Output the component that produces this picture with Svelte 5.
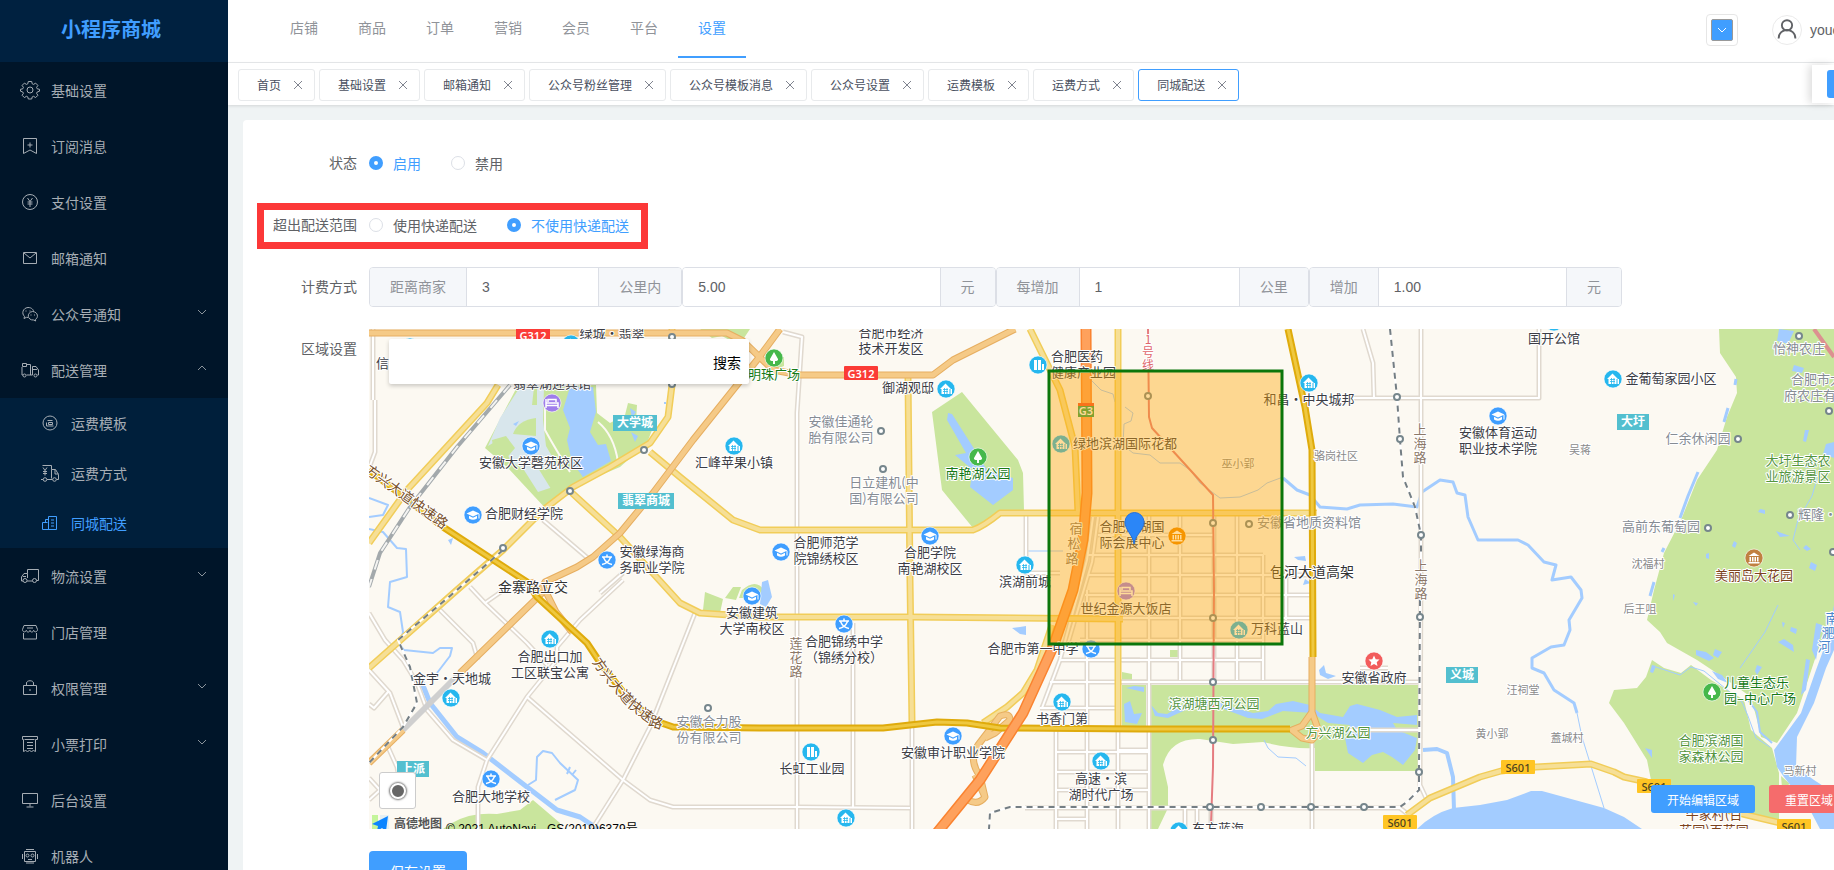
<script lang="ts">
    interface Label {
        x: number;
        y: number;
        lines: string[];
        tone?: string;
        anchor?: string;
    }

    interface Poi {
        x: number;
        y: number;
        kind: string;
    }

    interface MenuItem {
        name: string;
        icon: string;
        children?: MenuItem[];
        arrow?: boolean;
    }

    const topNav = ['店铺', '商品', '订单', '营销', '会员', '平台', '设置'];
    let activeNav = $state('设置');

    let tabs = $state(['首页', '基础设置', '邮箱通知', '公众号粉丝管理', '公众号模板消息', '公众号设置', '运费模板', '运费方式', '同城配送']);
    let activeTab = $state('同城配送');

    const menu: MenuItem[] = [
        { name: '基础设置', icon: 'gear' },
        { name: '订阅消息', icon: 'bookmark' },
        { name: '支付设置', icon: 'yen' },
        { name: '邮箱通知', icon: 'mail' },
        { name: '公众号通知', icon: 'wechat', arrow: true },
        {
            name: '配送管理',
            icon: 'delivery',
            arrow: true,
            children: [
                { name: '运费模板', icon: 'template' },
                { name: '运费方式', icon: 'freight' },
                { name: '同城配送', icon: 'city' }
            ]
        },
        { name: '物流设置', icon: 'truck', arrow: true },
        { name: '门店管理', icon: 'shop' },
        { name: '权限管理', icon: 'lock', arrow: true },
        { name: '小票打印', icon: 'receipt', arrow: true },
        { name: '后台设置', icon: 'monitor' },
        { name: '机器人', icon: 'robot' }
    ];

    let status = $state('on');
    let outside = $state('no');
    let keyword = $state('');

    let fees = $state([
        { id: 'distance', before: '距离商家', value: '3', after: '公里内' },
        { id: 'base', before: '', value: '5.00', after: '元' },
        { id: 'step', before: '每增加', value: '1', after: '公里' },
        { id: 'extra', before: '增加', value: '1.00', after: '元' }
    ]);

    function closeTab(name: string): void {
        tabs = tabs.filter((t) => t !== name);
    }

    // Map shapes
    const greens: string[] = [
        'M517 387L485 448L507 467L547 510L573 487L620 467L647 443L652 430L636 421L637 405L628 403L625 415L610 423L597 413L596 385Z',
        'M700 329H750L744 338L737 344L722 336L712 338Z',
        'M962 392L932 412L942 490L973 528L1003 510H1024L1023 473L1018 460Z',
        'M705 592L723 599L720 613L703 610Z M733 587L741 587L736 600L725 598Z M742 590Q756 578 764 590L762 594Q754 586 746 598L739 598Z',
        'M774 358L784 357V366L774 370Z',
        'M443 829L452 823Q470 812 497 814L520 810L533 800L560 823V829Z',
        'M1150 685H1418V771H1315V748Q1290 749 1263 742L1233 744L1200 739Q1170 738 1163 765L1168 787V808L1158 829H1151Z',
        'M1122 685H1146V727H1122Z M1170 650H1178V657H1170Z M1122 672L1132 674V680H1122Z',
        'M1719 329L1720 353L1736 377L1737 393L1727 417L1717 450L1697 480L1681 520L1664 553L1654 590L1647 620L1660 632L1667 643L1697 660L1727 680L1751 697L1757 720L1761 737L1777 743L1797 713L1817 653L1834 613V329Z',
        'M1652 660L1664 668L1681 673L1691 665L1711 680L1744 700L1751 730L1772 748L1779 773L1779 820L1747 813L1711 807L1652 803V785L1647 760L1624 723L1609 703L1614 690L1637 688L1646 677Z',
        'M1781 776L1790 784L1782 788Z M1828 818L1834 814V826Z'
    ];

    const campus = 'M520 387L500 418L488 446L498 440L512 462L524 470L538 492L556 486L560 470L546 446L543 420L544 387Z';

    const campusGreens: string[] = [
        'M513 434Q518 420 536 418L536 436Z',
        'M534 387H537V405H532Z',
        'M492 440L506 436L515 448L505 460L494 452Z',
        'M546 410L560 412L565 428L548 430Z',
        'M538 468L560 470L570 488L556 497Z'
    ];

    const waters: string[] = [
        'M570 387H593L596 412L590 432L598 445L606 444L611 461L583 477L572 462L567 440L570 428L563 410Z',
        'M630 408L636 412L632 418Z M631 432L638 436L635 442Z M513 424L519 421L516 426Z M664 402H666V404H664Z M448 540L453 538L451 545Z',
        'M948 413L952 414L973 447L987 470L1013 478V490L993 505L970 487L973 470L955 455L966 453L947 420Z',
        'M1012 628L1020 627L1026 626V635L1020 634Z',
        'M762 582L768 580L772 597L766 607L760 604Z',
        'M1151 705L1158 713L1167 714L1184 704L1213 699L1228 706L1253 713L1268 711L1276 704L1293 701L1310 705L1320 713L1343 717L1350 706L1357 704L1380 710L1397 717L1417 715V725L1393 723L1397 730L1417 738L1415 750L1403 765L1392 757L1383 752L1372 755L1363 763L1348 753L1345 738L1350 725L1328 723L1312 713L1283 711L1262 719L1248 718L1213 705L1190 708L1168 718L1155 716Z',
        'M1124 704L1130 701L1134 714L1142 713L1137 724L1125 722Z M1126 688L1134 686L1144 687V692Z',
        'M1319 670L1324 665L1326 673L1336 676L1328 679L1320 675Z',
        'M1294 557L1305 556L1306 561L1298 560Z M1305 579L1311 583L1303 585Z',
        'M1417 829Q1432 814 1453 808L1480 805L1507 800L1531 791H1542L1604 808L1624 817L1642 829Z',
        'M1834 605L1827 640L1816 670L1801 713L1774 750L1777 767L1784 777L1810 810L1820 829H1834V793L1814 780L1796 767L1797 737L1814 703L1826 668L1834 650Z',
        'M1779 329L1794 331L1788 344L1777 341Z M1794 365L1804 368L1802 373L1792 371Z M1805 430L1809 430L1806 442L1803 441Z M1826 444L1834 442V458L1823 454Z M1805 460L1815 458L1816 467L1805 468Z',
        'M1760 509L1765 510V514L1758 512Z M1734 541L1737 543L1735 548L1732 546Z M1776 531L1790 536L1780 537Z M1806 545L1811 549L1807 551L1803 548Z M1811 562L1817 565L1815 571L1809 568Z M1706 554L1709 553V559L1706 558Z',
        'M1696 650L1706 652L1714 658L1709 661L1696 655Z M1715 649L1722 652L1718 658L1713 655Z M1757 665L1762 667L1757 675L1755 671Z M1712 671L1722 675L1728 683L1718 679Z M1791 627L1797 629L1796 634L1790 631Z M1782 622L1785 623L1783 628Z M1778 642L1784 639L1793 645L1794 652Z',
        'M1806 659L1810 660L1806 690L1801 695Z M1816 623L1822 625L1816 660L1812 650Z M1652 665L1656 666L1653 673L1650 672Z M1645 748L1652 750V758Z M1673 594L1675 595L1673 601Z M1693 602L1698 603L1696 606Z'
    ];

    const streams = [
        { d: 'M1283 478L1297 490L1310 495L1320 507L1347 509L1360 505L1393 504L1417 507L1422 492L1440 480L1453 482L1457 493L1465 495L1468 517L1478 540H1518L1528 545L1544 562L1556 565L1552 580L1571 577L1581 590L1582 598L1569 620L1570 630L1564 645L1551 647L1532 658V668L1544 673L1554 690L1574 703L1577 713', w: 3 },
        { d: 'M1577 713L1582 737L1604 808', w: 1 },
        { d: 'M1423 750L1437 749L1447 753L1453 777L1454 810', w: 4 },
        { d: 'M1125 407L1133 413L1131 421L1124 424L1123 445L1133 453L1150 455L1160 463L1180 463L1190 470L1200 483L1220 498L1240 497L1258 490L1267 483L1283 477', w: 1 },
        { d: 'M1091 380L1101 390L1113 394L1115 402', w: 1 },
        { d: 'M369 498L388 505L383 515L369 517M369 529L383 532L397 548L406 549L407 577L390 582L388 607L400 612L403 632L400 645L404 650L433 653L440 648L452 648L450 656L437 673', w: 2 },
        { d: 'M422 683L430 703L457 737L483 753L527 787L557 810L580 817L598 829', w: 5 },
        { d: 'M528 785L536 780L537 757L543 751L552 753L560 763L578 780L575 790L555 800M567 774L570 767M572 775L576 770', w: 2 },
        { d: 'M1264 740L1268 748L1278 757L1296 758L1306 766', w: 1 },
        { d: 'M1028 551H1063', w: 1 },
        { d: 'M1698 472L1688 496L1680 518M1728 408L1724 422M1736 379L1735 385M1664 548L1662 552M1654 582L1650 596', w: 3 },
        { d: 'M1656 667L1680 675L1691 667L1704 671L1742 702L1748 716L1756 738L1770 747', w: 1 },
        { d: 'M1746 697L1757 712L1760 732L1772 743', w: 2 },
        { d: 'M1822 462L1812 496L1798 520L1793 540L1800 550M1778 605L1765 632L1740 668', w: 1 }
    ];

    const minorRoads: string[] = [
        'M373 329V400M375 400V452L369 468',
        'M369 613L385 640L403 660L417 683L427 710L453 740L487 760',
        'M369 670L390 693L403 727M369 704L374 708L388 692M388 747L397 767L401 790M369 778L380 790L369 800',
        'M470 587L485 603L508 587M485 603L527 643L547 665',
        'M440 610L473 643L478 660',
        'M623 580L580 620L557 647L557 660L527 697L487 760L478 787V829',
        'M527 697L623 780L650 800L673 807H797L910 808',
        'M695 613L650 727L623 780L592 829',
        'M543 520L590 560M623 573L600 593',
        'M783 332L802 337L797 413V829',
        'M853 623V808M912 727V829M1026 513V573H1060',
        'M1056 727V829M1087 590V829M1118 727V829',
        'M1060 660H1140M1050 682H1148M1040 708H1115M1056 752H1148M1056 772H1148M1056 790H1148M1056 819H1088M1118 750H1148',
        'M1093 517L1087 560L1060 660L1042 708M1098 517L1092 562L1066 650',
        'M1149 515V829M1180 515V680M1214 515V680M1237 515V680M1263 555V680M1286 570V620',
        'M1098 535H1213M1088 555H1263M1088 575H1310M1085 595H1310M1080 618H1310M1080 640H1263M1122 660H1263M1122 682H1420',
        'M1363 329L1373 363L1374 398M1350 398H1539V329',
        'M1421 329V560L1420 785L1427 800M1400 808L1410 816',
        'M1312 740V829M1025 808H1400M1185 808V829M1197 808V829M1211 808V829',
        'M1350 730H1420M1360 668H1388'
    ];

    const yellowRoads: string[] = [
        'M498 385L487 403L407 490L369 543',
        'M672 329V385L668 417L650 443L610 467L573 487L543 510L503 550L457 590L369 668',
        'M650 452L680 477L733 520L760 530H973Q984 526 1000 513H1317',
        'M572 493L620 537L680 603L700 613L760 617H910L1123 619',
        'M908 377L910 580L912 723',
        'M1030 329L1060 390L1075 447L1078 513',
        'M1118 329V727',
        'M1052 625L1037 670L1023 693L1007 707L983 723',
        'M1407 815L1430 798L1480 777L1501 771L1536 767L1591 764L1614 772L1624 777L1647 782',
        'M1711 806L1747 815L1797 827'
    ];

    const orangeRoads: string[] = [
        'M369 333H727L743 341L773 370L800 375H933L953 360L1015 329',
        'M780 329L757 360L737 385L693 440L653 493L620 533L593 557L577 567L545 582L537 598L460 673',
        'M403 730L369 763',
        'M537 598L545 590L556 612L572 632M530 580L537 598',
        'M980 776Q968 760 978 745L988 732L1000 716Q1010 712 1010 720L995 733L985 738M980 776L985 797Q978 806 968 800M985 797L975 775',
        'M1312 657V712L1302 726L1292 730L1302 738L1312 740L1319 732L1312 712'
    ];

    const mainRoads: string[] = [
        'M369 470L443 527L527 582L537 597L587 643L603 667L627 697L653 720L673 727L760 728H883L937 722L967 723L1000 728L1140 729H1290',
        'M1288 329L1305 407L1312 450L1313 657'
    ];

    const highway = 'M1086 329L1087 493L1083 540L1073 590L1053 647L1023 713L980 780L936 834';
    const metro = 'M1148 329L1149 417L1152 428L1213 495L1214 590L1213 767L1211 823';
    const grayRail = 'M510 385L457 447L410 507L380 553L369 587';
    const dashedRails: string[] = [
        'M1390 329L1397 397L1400 440L1403 477L1415 507L1421 535V553M1420 600L1419 772V790L1407 802L1400 807H1010L990 813L989 829',
        'M503 550L457 590L398 640L410 667L417 703L403 727L369 763'
    ];

    const stops = [
        [672, 337], [672, 384], [644, 450], [570, 491], [503, 548], [708, 708], [881, 431], [883, 469],
        [1148, 396], [1213, 523], [1213, 618], [1213, 682], [1213, 740], [1210, 807], [1261, 807], [1311, 807],
        [1364, 807], [1419, 772], [1420, 617], [1421, 535], [1400, 439], [1397, 397], [1249, 524], [1738, 439],
        [1708, 528], [1799, 336], [1829, 411], [1790, 515], [1833, 552]
    ];

    const poiColors: Record<string, string> = {
        house: '#26b7ee',
        tower: '#26b7ee',
        cap: '#3f9eff',
        wen: '#3f9eff',
        hotel: '#9f7eea',
        tree: '#46b84b',
        hall: '#f08a00',
        villa: '#c08040',
        star: '#f25c5c'
    };

    const pois: Poi[] = [
        { x: 410, y: 347, kind: 'house' }, { x: 571, y: 344, kind: 'house' }, { x: 734, y: 446, kind: 'house' },
        { x: 550, y: 639, kind: 'house' }, { x: 451, y: 698, kind: 'house' }, { x: 946, y: 389, kind: 'house' },
        { x: 1025, y: 565, kind: 'house' }, { x: 1061, y: 444, kind: 'house' }, { x: 1062, y: 702, kind: 'house' },
        { x: 846, y: 818, kind: 'house' }, { x: 1101, y: 761, kind: 'house' }, { x: 1309, y: 383, kind: 'house' },
        { x: 1239, y: 630, kind: 'house' }, { x: 1179, y: 831, kind: 'house' }, { x: 1613, y: 379, kind: 'house' },
        { x: 1554, y: 322, kind: 'house' }, { x: 1038, y: 365, kind: 'tower' }, { x: 811, y: 752, kind: 'tower' },
        { x: 531, y: 446, kind: 'cap' }, { x: 473, y: 515, kind: 'cap' }, { x: 752, y: 596, kind: 'cap' },
        { x: 781, y: 552, kind: 'cap' }, { x: 930, y: 536, kind: 'cap' }, { x: 953, y: 736, kind: 'cap' },
        { x: 1498, y: 416, kind: 'cap' }, { x: 607, y: 560, kind: 'wen' }, { x: 491, y: 779, kind: 'wen' },
        { x: 844, y: 624, kind: 'wen' }, { x: 1091, y: 649, kind: 'wen' }, { x: 552, y: 403, kind: 'hotel' },
        { x: 1126, y: 591, kind: 'hotel' }, { x: 774, y: 358, kind: 'tree' }, { x: 978, y: 457, kind: 'tree' },
        { x: 1712, y: 692, kind: 'tree' }, { x: 1177, y: 536, kind: 'hall' }, { x: 1754, y: 558, kind: 'villa' },
        { x: 1374, y: 661, kind: 'star' }
    ];

    const labels: Label[] = [
        { x: 612, y: 334, lines: ['绿城·翡翠'] },
        { x: 389, y: 364, lines: ['信达'] },
        { x: 552, y: 384, lines: ['翡翠湖迎宾馆'] },
        { x: 531, y: 463, lines: ['安徽大学磬苑校区'] },
        { x: 734, y: 463, lines: ['汇峰苹果小镇'] },
        { x: 524, y: 514, lines: ['合肥财经学院'] },
        { x: 652, y: 552, lines: ['安徽绿海商', '务职业学院'] },
        { x: 533, y: 588, lines: ['金寨路立交'], tone: 'road' },
        { x: 550, y: 657, lines: ['合肥出口加', '工区联宝公寓'] },
        { x: 452, y: 679, lines: ['金宇·天地城'] },
        { x: 491, y: 797, lines: ['合肥大地学校'] },
        { x: 709, y: 722, lines: ['安徽合力股', '份有限公司'], tone: 'gray' },
        { x: 752, y: 613, lines: ['安徽建筑', '大学南校区'] },
        { x: 774, y: 375, lines: ['明珠广场'], tone: 'green' },
        { x: 891, y: 333, lines: ['合肥市经济', '技术开发区'] },
        { x: 908, y: 388, lines: ['御湖观邸'] },
        { x: 841, y: 422, lines: ['安徽佳通轮', '胎有限公司'], tone: 'gray' },
        { x: 884, y: 483, lines: ['日立建机(中', '国)有限公司'], tone: 'gray' },
        { x: 978, y: 474, lines: ['南艳湖公园'], tone: 'green' },
        { x: 826, y: 543, lines: ['合肥师范学', '院锦绣校区'] },
        { x: 930, y: 553, lines: ['合肥学院', '南艳湖校区'] },
        { x: 1025, y: 582, lines: ['滨湖前城'] },
        { x: 1051, y: 357, lines: ['合肥医药', '健康产业园'], anchor: 'start' },
        { x: 1125, y: 444, lines: ['绿地滨湖国际花都'] },
        { x: 1132, y: 527, lines: ['合肥滨湖国', '际会展中心'] },
        { x: 844, y: 642, lines: ['合肥锦绣中学', '（锦绣分校）'] },
        { x: 1033, y: 649, lines: ['合肥市第一中学'] },
        { x: 1062, y: 719, lines: ['书香门第'] },
        { x: 953, y: 753, lines: ['安徽审计职业学院'] },
        { x: 812, y: 769, lines: ['长虹工业园'] },
        { x: 1101, y: 779, lines: ['高速·滨', '湖时代广场'] },
        { x: 1126, y: 609, lines: ['世纪金源大饭店'] },
        { x: 1309, y: 400, lines: ['和昌·中央城邦'] },
        { x: 1336, y: 456, lines: ['骆岗社区'], tone: 'village' },
        { x: 1238, y: 464, lines: ['巫小郢'], tone: 'village' },
        { x: 1309, y: 523, lines: ['安徽省地质资料馆'], tone: 'gray' },
        { x: 1312, y: 573, lines: ['包河大道高架'], tone: 'road' },
        { x: 1277, y: 629, lines: ['万科蓝山'] },
        { x: 1374, y: 678, lines: ['安徽省政府'] },
        { x: 1214, y: 704, lines: ['滨湖塘西河公园'], tone: 'park' },
        { x: 1338, y: 733, lines: ['方兴湖公园'], tone: 'park' },
        { x: 1218, y: 829, lines: ['东方蓝海'] },
        { x: 1671, y: 379, lines: ['金葡萄家园小区'] },
        { x: 1554, y: 339, lines: ['国开公馆'] },
        { x: 1498, y: 433, lines: ['安徽体育运动', '职业技术学院'] },
        { x: 1580, y: 450, lines: ['吴蒋'], tone: 'village' },
        { x: 1698, y: 439, lines: ['仁余休闲园'], tone: 'gray' },
        { x: 1661, y: 527, lines: ['高前东葡萄园'], tone: 'gray' },
        { x: 1799, y: 349, lines: ['怡神农庄'], tone: 'gray' },
        { x: 1791, y: 380, lines: ['合肥市大'], tone: 'gray', anchor: 'start' },
        { x: 1784, y: 396, lines: ['府农庄有'], tone: 'gray', anchor: 'start' },
        { x: 1798, y: 461, lines: ['大圩生态农', '业旅游景区'], tone: 'park' },
        { x: 1798, y: 515, lines: ['辉隆·大'], tone: 'gray', anchor: 'start' },
        { x: 1754, y: 576, lines: ['美丽岛大花园'], tone: 'brown' },
        { x: 1648, y: 564, lines: ['沈福村'], tone: 'village' },
        { x: 1640, y: 609, lines: ['后王咀'], tone: 'village' },
        { x: 1523, y: 690, lines: ['汪祠堂'], tone: 'village' },
        { x: 1492, y: 734, lines: ['黄小郢'], tone: 'village' },
        { x: 1567, y: 738, lines: ['蓋城村'], tone: 'village' },
        { x: 1724, y: 683, lines: ['儿童生态乐', '园–中心广场'], tone: 'green', anchor: 'start' },
        { x: 1711, y: 741, lines: ['合肥滨湖国', '家森林公园'], tone: 'park' },
        { x: 1800, y: 771, lines: ['马新村'], tone: 'village' },
        { x: 1714, y: 815, lines: ['牛家村(百', '花园)百花园'], tone: 'brown' }
    ];

    // Street names written top to bottom, one character per row
    const columns = [
        { x: 1076, y: 529, step: 15, lean: -2, text: '宿松路', tone: 'street' },
        { x: 796, y: 644, step: 14, lean: 0, text: '莲花路', tone: 'street' },
        { x: 1420, y: 430, step: 14, lean: 0, text: '上海路', tone: 'street' },
        { x: 1421, y: 566, step: 14, lean: 0, text: '上海路', tone: 'street' },
        { x: 1148, y: 340, step: 13, lean: 0, text: '1号线', tone: 'line' },
        { x: 1832, y: 619, step: 14, lean: -4, text: '南淝河', tone: 'river' }
    ];

    const districts = [
        { x: 635, y: 423, text: '大学城' },
        { x: 646, y: 501, text: '翡翠商城' },
        { x: 413, y: 769, text: '上派' },
        { x: 1462, y: 675, text: '义城' },
        { x: 1633, y: 422, text: '大圩' }
    ];

    const shields = [
        { x: 533, y: 335, text: 'G312', kind: 'national' },
        { x: 861, y: 373, text: 'G312', kind: 'national' },
        { x: 1400, y: 822, text: 'S601', kind: 'province' },
        { x: 1518, y: 767, text: 'S601', kind: 'province' },
        { x: 1654, y: 786, text: 'S601', kind: 'province' },
        { x: 1794, y: 826, text: 'S601', kind: 'province' }
    ];
</script>

{#snippet menuIcon(name: string)}
    <svg class="icon" viewBox="0 0 20 20" aria-hidden="true">
        {#if name === 'gear'}
            <circle cx="10" cy="10" r="3" />
            <path d="M8.3 1.5h3.4l.5 2.3 1.4.6 2-1.3 2.3 2.3-1.3 2 .6 1.4 2.3.5v1.9l-2.3.8-.6 1.3 1.3 2-2.3 2.3-2-1.3-1.4.6-.5 2.1H8.300l-.5-2.1-1.4-.6-2 1.3-2.3-2.3 1.3-2-.6-1.3-2.3-.8V9.300l2.300-.5.6-1.4-1.300-2 2.300-2.300 2 1.300 1.4-.6z" />
        {:else if name === 'bookmark'}
            <path d="M3.5 2.5h13v15L10 14l-6.5 3.5zM10 6.5v5M7.5 9h5" />
        {:else if name === 'yen'}
            <circle cx="10" cy="10" r="7.5" />
            <path d="M7.5 6l2.5 3.5L12.5 6M10 9.5V15M7.5 10h5M7.5 12h5" />
        {:else if name === 'mail'}
            <path d="M3.5 4.5h13v11h-13zM4 5l6 5 6-5" />
        {:else if name === 'wechat'}
            <path d="M8 13.5l-1.5-.2-2.5 1.2.5-2.2C1.5 10 2.5 4 8 3.5c4 0 5.5 2.5 5.5 4" />
            <path d="M12.5 7.5c6 .5 6 6.500 2.800 8l.4 1.5-2-1c-6.500.5-7.500-7.500-1.200-8.500zM5.5 7h1M9.5 7h1M10.5 11h1M14 11h1" />
        {:else if name === 'delivery'}
            <path d="M2.5 3.5h4v3h-4zM6.5 4.5h4v10.5M2 7v8h1M6.5 15h6M12.5 15V6.5h3.5l2.5 3.5v5h-1M13 9.5h4" />
            <circle cx="4.5" cy="15.5" r="1.5" /><circle cx="15.5" cy="15.5" r="1.5" />
        {:else if name === 'template'}
            <circle cx="10" cy="10" r="7" />
            <path d="M7.5 7.5h5M8.5 9.5h4v2h-4zM6.5 9.5v3.5h7" />
        {:else if name === 'freight'}
            <path d="M1 16.5h2M7 16.5h5.5M16.5 16.5h2v-5l-3-5h-4V2.5h-9M11.5 6.5v9M3 4.5l2 3 2-3M5 7.5v5M3 8.5h4M3 10.5h4M15 7v4h3.5" />
            <circle cx="5" cy="16.5" r="1.8" /><circle cx="14.5" cy="16.5" r="1.8" />
        {:else if name === 'city'}
            <path d="M2.5 9.5h5M2.5 9.5v7h14M8.5 16.5V3.5h8v13M5.5 9V6.5h3M11 7h3M11 10h3M11 13h3" />
        {:else if name === 'truck'}
            <path d="M7.500 3.5h11v11h-2M7.500 3.5v4H4L1.5 11v4H3M7 15h5.500M7.5 7.5V12M3 10.5h3" />
            <circle cx="5" cy="14.5" r="2" /><circle cx="14.5" cy="14.5" r="2" />
        {:else if name === 'shop'}
            <path d="M4 3.5h12l1.5 4c0 3-3.500 3-3.800.8-.5 2.300-3.500 2.300-3.700 0-.3 2.300-3.300 2.300-3.700 0-.5 2.200-3.800 2.200-3.800-.8zM3.5 11v6h13v-6M7 6h6" />
        {:else if name === 'lock'}
            <path d="M3.5 7.5h13v9h-13zM6.5 7.5V5c0-3 7-3 7 0v2.5M10 11v2" />
        {:else if name === 'receipt'}
            <path d="M2.5 2.5h15v3h-2v12l-2-1-2 1-2-1-2 1-2-1-2 1v-12h-1zM4.5 5.5h10M7 8.5h6M7 11.5h6M7 14.5h6" />
        {:else if name === 'monitor'}
            <path d="M2.5 3.5h15v10h-15zM10 13.5v3M6.5 17h7" />
        {:else if name === 'robot'}
            <path d="M4.5 5.5h11v10h-11zM6 3.5h8M2.5 8v5M17.5 8v5M6 17h8M8 13.5h4" />
            <circle cx="7.5" cy="9.5" r="1.5" /><circle cx="12.5" cy="9.5" r="1.5" />
        {/if}
    </svg>
{/snippet}

{#snippet poiGlyph(kind: string)}
    {#if kind === 'house'}
        <path d="M-6 0L-.5-5.5 5 0H3.5V5H-4.5V0zM4.500 0h1.500v5h-1.500z" fill="#fff" />
        <path d="M-3 .5h5M-3 2.5h5M-1.500-1v6M1-1v6" stroke="#26b7ee" stroke-width=".8" fill="none" />
    {:else if kind === 'tower'}
        <path d="M-4-5h3V5h-3zM0-5h3V5H0zM4-1h2v6H4z" fill="#fff" />
    {:else if kind === 'cap'}
        <path d="M-6.5-1.5L0-4.5 6.5-1.5 0 1.5zM-4 .8L0 2.7 4 .8V3.5Q0 6-4 3.5zM5.5-1h1v4.5h-1z" fill="#fff" />
    {:else if kind === 'wen'}
        <path d="M0-5.5v2M-5-3H5M-3.5-2.5Q-1 3.5 5 4.5M3.5-2.5Q1 3.5-5 4.5" stroke="#fff" stroke-width="1.5" fill="none" />
    {:else if kind === 'hotel'}
        <path d="M-6-4V5M-6 2.5H6M6 5V0H-6M-4-1V-3.5H4V-1" stroke="#fff" stroke-width="1.5" fill="none" />
    {:else if kind === 'tree'}
        <path d="M0-6L4 1Q4.5 3 1 3V6H-1V3Q-4.5 3-4 1z" fill="#fff" />
    {:else if kind === 'star'}
        <path d="M0-5.5L1.700-1.800 5.500-1.400 2.700 1.300 3.500 5 0 3.100-3.500 5-2.700 1.300-5.500-1.400-1.700-1.800z" fill="#fff" />
    {:else}
        <path d="M-5.5-2L0-5.5 5.5-2zM-5.5 4h11v1.5h-11zM-4.5-1h1.5v4.5h-1.5zM-2-1h1.5v4.5H-2zM.5-1H2v4.5H.5zM3-1h1.5v4.5H3z" fill="#fff" />
    {/if}
{/snippet}

{#snippet arrow(up: boolean)}
    <svg class="arrow" class:up viewBox="0 0 10 6" aria-hidden="true"><path d="M1 1l4 4 4-4" /></svg>
{/snippet}

<div class="layout">
    <aside class="sidebar">
        <h1 class="brand">小程序商城</h1>
        <nav class="menu">
            {#each menu as item}
                <a class="menu-item" href="#{item.icon}">
                    {@render menuIcon(item.icon)}
                    <span>{item.name}</span>
                    {#if item.arrow}{@render arrow(!!item.children)}{/if}
                </a>
                {#if item.children}
                    <div class="submenu">
                        {#each item.children as child}
                            <a class="menu-item child" class:active={child.name === '同城配送'} href="#{child.icon}">
                                {@render menuIcon(child.icon)}
                                <span>{child.name}</span>
                            </a>
                        {/each}
                    </div>
                {/if}
            {/each}
        </nav>
    </aside>

    <div class="main">
        <header class="topbar">
            <nav class="top-nav">
                {#each topNav as item}
                    <a href="#top" class:active={activeNav === item} onclick={() => (activeNav = item)}>{item}</a>
                {/each}
            </nav>
            <div class="account">
                <button class="picker" aria-label="主题颜色">
                    <span class="swatch"><svg viewBox="0 0 10 6"><path d="M1 1l4 4 4-4" /></svg></span>
                </button>
                <span class="avatar">
                    <svg viewBox="0 0 30 30"><circle cx="15" cy="10" r="5.5" /><path d="M6 24c0-12 18-12 18 0" /></svg>
                </span>
                <span class="user">youc</span>
            </div>
        </header>

        <div class="tabbar">
            <div class="tabs">
                {#each tabs as tab}
                    <div class="tab" class:active={activeTab === tab}>
                        <button class="tab-name" onclick={() => (activeTab = tab)}>{tab}</button>
                        <button class="tab-close" aria-label="关闭" onclick={() => closeTab(tab)}>
                            <svg viewBox="0 0 10 10"><path d="M1 1l8 8M9 1l-8 8" /></svg>
                        </button>
                    </div>
                {/each}
            </div>
            <div class="tab-tools"><button aria-label="标签选项"></button></div>
        </div>

        <main class="page">
            <form class="card" onsubmit={(e) => e.preventDefault()}>
                <div class="row">
                    <span class="label">状态</span>
                    <div class="radios">
                        <label><input type="radio" name="status" value="on" bind:group={status} /><span>启用</span></label>
                        <label><input type="radio" name="status" value="off" bind:group={status} /><span>禁用</span></label>
                    </div>
                </div>

                <div class="row marked">
                    <span class="label">超出配送范围</span>
                    <div class="radios">
                        <label><input type="radio" name="outside" value="yes" bind:group={outside} /><span>使用快递配送</span></label>
                        <label><input type="radio" name="outside" value="no" bind:group={outside} /><span>不使用快递配送</span></label>
                    </div>
                </div>

                <div class="row">
                    <span class="label">计费方式</span>
                    <div class="fees">
                        {#each fees as fee}
                            <div class="fee">
                                {#if fee.before}<label class="addon" for={fee.id}>{fee.before}</label>{/if}
                                <input id={fee.id} type="text" aria-label={fee.before || '起步价'} bind:value={fee.value} />
                                <span class="addon">{fee.after}</span>
                            </div>
                        {/each}
                    </div>
                </div>

                <div class="row top">
                    <span class="label">区域设置</span>
                    <div class="map">
                        <svg class="canvas" viewBox="369 329 1465 500" preserveAspectRatio="xMinYMin slice">
                            {#each greens as d}<path class="green-area" {d} />{/each}
                            <path d={campus} fill="#d8e6ec" />
                            {#each campusGreens as d}<path class="green-area" {d} />{/each}
                            {#each waters as d}<path class="water" {d} />{/each}
                            {#each streams as s}<path class="stream" d={s.d} stroke-width={s.w} />{/each}
                            <path d="M545 405V430Q556 450 570 472M598 422Q614 435 618 462" stroke="#fcf9f2" stroke-width="2" fill="none" />

                            {#each minorRoads as d}<path class="road minor-edge" {d} />{/each}
                            {#each minorRoads as d}<path class="road minor" {d} />{/each}
                            {#each yellowRoads as d}<path class="road yellow-edge" {d} />{/each}
                            {#each yellowRoads as d}<path class="road yellow" {d} />{/each}
                            <path class="road" d="M460 673L403 730" stroke="#cfcfcf" stroke-width="6" />
                            {#each orangeRoads as d}<path class="road orange-edge" {d} />{/each}
                            {#each orangeRoads as d}<path class="road orange" {d} />{/each}
                            {#each mainRoads as d}<path class="road main-edge" {d} />{/each}
                            {#each mainRoads as d}<path class="road main-road" {d} />{/each}
                            <path class="road" d={highway} stroke="#fa8330" stroke-width="11" />
                            <path class="road" d={highway} stroke="#fea15c" stroke-width="8" />
                            <path class="road" d="M1814 329L1834 357" stroke="#dc9090" stroke-width="4" />

                            <path class="road" d={grayRail} stroke="#a3a9ac" stroke-width="4" />
                            <path class="road" d={grayRail} stroke="#f4f4f2" stroke-width="2" stroke-dasharray="10 10" />
                            {#each dashedRails as d}
                                <path class="road" {d} stroke="#fff" stroke-width="2" />
                                <path class="road" {d} stroke="#747e84" stroke-width="2" stroke-dasharray="6 5" />
                            {/each}
                            <path class="road" d={metro} stroke="#e57c80" stroke-width="2" />

                            {#each stops as [x, y]}
                                <circle cx={x} cy={y} r="3" fill="#fff" stroke="#76868c" stroke-width="2" />
                            {/each}

                            {#each districts as d}
                                <rect x={d.x - d.text.length * 6 - 4} y={d.y - 8} width={d.text.length * 12 + 8} height="16" fill="#53bfcf" />
                                <text class="district" x={d.x} y={d.y + 4}>{d.text}</text>
                            {/each}
                            {#each shields as s}
                                <rect class={s.kind} x={s.x - 17} y={s.y - 7} width="34" height="14" rx="1" />
                                <text class="shield {s.kind}-text" x={s.x} y={s.y + 5}>{s.text}</text>
                            {/each}
                            <rect x="1078" y="403" width="16" height="14" fill="#2f9e4f" />
                            <path d="M1078 403h16v3h-16z" fill="#f5522d" />
                            <text class="shield national-text" x="1086" y="415">G3</text>

                            {#each pois as p}
                                <g transform="translate({p.x} {p.y})">
                                    <circle r="9" fill={poiColors[p.kind]} stroke="#fff" stroke-opacity="0.6" />
                                    {@render poiGlyph(p.kind)}
                                </g>
                            {/each}

                            {#each labels as l}
                                <text class="name {l.tone ?? ''}" text-anchor={l.anchor ?? 'middle'}>
                                    {#each l.lines as line, i}<tspan x={l.x} y={l.y + 4 + i * 16}>{line}</tspan>{/each}
                                </text>
                            {/each}
                            {#each columns as c}
                                <text class="name {c.tone}" text-anchor="middle">
                                    {#each c.text as ch, i}<tspan x={c.x + i * c.lean} y={c.y + 4 + i * c.step}>{ch}</tspan>{/each}
                                </text>
                            {/each}

                            <path id="expressway-west" d="M364 472L443 529L470 548" fill="none" />
                            <path id="expressway-south" d="M592 662L604 679L628 707L654 727L680 735" fill="none" />
                            <text class="name express"><textPath href="#expressway-west">方兴大道快速路</textPath></text>
                            <text class="name express"><textPath href="#expressway-south">方兴大道快速路</textPath></text>

                            <rect x="1049" y="371" width="233" height="273" fill="orange" fill-opacity="0.4" stroke="#0b760b" stroke-width="3" />
                            <path d="M1134 544C1133 535 1125 530 1125 522a9.5 9.5 0 0 1 19 0C1144 530 1135 535 1134 544z" fill="#2b86f7" stroke="#2270dd" />
                        </svg>

                        <div class="search">
                            <input type="text" aria-label="搜索地点" bind:value={keyword} />
                            <button type="button">搜索</button>
                        </div>
                        <button class="locate" type="button" aria-label="定位"><span></span></button>
                        <div class="credit">
                            <svg viewBox="0 0 20 18">
                                <path d="M1 1h6v16H1z" fill="#c4f59a" /><path d="M9 1h9v14H9z" fill="#e6eff2" />
                                <path d="M17 2L1 10l6 2-1 5 5-3 4 3z" fill="#0b84ff" />
                            </svg>
                            <b>高德地图</b>
                            <span>© 2021 AutoNavi - GS(2019)6379号</span>
                        </div>
                        <div class="map-actions">
                            <button class="primary" type="button">开始编辑区域</button>
                            <button class="danger" type="button">重置区域</button>
                        </div>
                    </div>
                </div>

                <div class="row">
                    <span class="label"></span>
                    <button class="save" type="submit">保存设置</button>
                </div>
            </form>
        </main>
    </div>
</div>

<style>
    :global(body) {
        margin: 0;
        overflow: hidden;
    }

    .layout {
        display: flex;
        height: 100vh;
        overflow: hidden;
        font-family: "Liberation Sans", "Noto Sans CJK SC", sans-serif;
        font-size: 14px;
        color: #606266;
        background: #eff3f4;
    }

    button,
    input {
        font-family: inherit;
        font-size: inherit;
        margin: 0;
    }

    button {
        cursor: pointer;
    }

    a {
        text-decoration: none;
    }

    .sidebar {
        flex: 0 0 228px;
        background: #001529;
        overflow: hidden;
    }

    .brand {
        height: 62px;
        margin: 0;
        padding-right: 6px;
        box-sizing: border-box;
        background: #002140;
        color: #409eff;
        font-size: 20px;
        line-height: 60px;
        text-align: center;
    }

    .menu-item {
        display: flex;
        align-items: center;
        height: 56px;
        padding: 0 20px;
        color: #a6adb4;
    }

    .menu-item span {
        margin-left: 11px;
    }

    .submenu {
        background: #001f3b;
    }

    .menu-item.child {
        height: 50px;
        padding-left: 40px;
    }

    .menu-item.active {
        color: #409eff;
    }

    .icon {
        flex: none;
        width: 20px;
        height: 20px;
        fill: none;
        stroke: currentColor;
        stroke-width: 1;
    }

    .arrow {
        width: 10px;
        height: 6px;
        margin: 0 1px 4px auto;
        fill: none;
        stroke: #8a939b;
    }

    .arrow.up {
        transform: rotate(180deg);
    }

    .main {
        flex: 1;
        min-width: 0;
        display: flex;
        flex-direction: column;
    }

    .topbar {
        flex: none;
        display: flex;
        height: 62px;
        background: #fff;
        border-bottom: 1px solid #e8eaec;
    }

    .top-nav {
        display: flex;
        padding-left: 42px;
    }

    .top-nav a {
        height: 56px;
        padding: 0 20px;
        line-height: 56px;
        color: #909399;
        border-bottom: 2px solid transparent;
    }

    .top-nav a.active {
        color: #409eff;
        border-color: #409eff;
    }

    .account {
        display: flex;
        align-items: center;
        width: 128px;
        height: 60px;
        margin-left: auto;
        overflow: hidden;
    }

    .picker {
        flex: none;
        width: 32px;
        height: 32px;
        padding: 4px;
        background: #fff;
        border: 1px solid #e6e6e6;
        border-radius: 4px;
    }

    .swatch {
        display: flex;
        align-items: center;
        justify-content: center;
        height: 20px;
        background: #409eff;
        border: 1px solid #999;
        border-radius: 2px;
    }

    .swatch svg {
        width: 10px;
        fill: none;
        stroke: #fff;
    }

    .avatar {
        flex: none;
        width: 28px;
        height: 28px;
        margin: 0 8px 0 34px;
        border: 1px solid #ebebeb;
        border-radius: 50%;
    }

    .avatar svg {
        display: block;
        fill: none;
        stroke: #606266;
        stroke-width: 2;
    }

    .tabbar {
        flex: none;
        display: flex;
        align-items: center;
        height: 42px;
        padding-left: 10px;
        background: #fff;
        box-shadow: 0 1px 3px rgba(0, 0, 0, 0.12);
    }

    .tabs {
        display: flex;
        flex: 1;
        gap: 4px;
        padding-top: 2px;
    }

    .tab {
        display: flex;
        align-items: center;
        gap: 12px;
        height: 30px;
        padding: 0 11px 0 18px;
        border: 1px solid #e8eaec;
        border-radius: 3px;
    }

    .tab.active {
        border-color: #409eff;
    }

    .tab-name,
    .tab-close {
        padding: 0;
        border: 0;
        background: none;
        color: #495060;
        font-size: 12px;
        white-space: nowrap;
    }

    .tab-name {
        padding-bottom: 2px;
    }

    .tab-close {
        width: 10px;
        height: 10px;
    }

    .tab-close svg {
        display: block;
        stroke: #80848f;
    }

    .tab-tools {
        align-self: center;
        width: 22px;
        height: 38px;
        overflow: hidden;
        background: #fff;
        box-shadow: -3px 0 8px rgba(0, 0, 0, 0.14);
    }

    .tab-tools button {
        width: 40px;
        height: 28px;
        margin: 5px 0 0 15px;
        border: 0;
        border-radius: 3px;
        background: #409eff;
    }

    .page {
        padding: 15px 0 0 15px;
    }

    .card {
        padding: 23px 0 40px 16px;
        background: #fff;
        border-radius: 4px 0 0 4px;
    }

    .row {
        position: relative;
        display: flex;
        align-items: center;
        min-height: 40px;
        margin-bottom: 22px;
    }

    .row.top {
        align-items: flex-start;
    }

    .label {
        flex: 0 0 110px;
        padding-right: 12px;
        box-sizing: border-box;
        line-height: 40px;
        text-align: right;
    }

    /* red frame over the highlighted option */
    .marked::after {
        content: '';
        position: absolute;
        top: -2px;
        left: -2px;
        width: 391px;
        height: 46px;
        box-sizing: border-box;
        border: 7px solid #fc3838;
        pointer-events: none;
    }

    .radios {
        display: flex;
        gap: 30px;
    }

    .radios label {
        display: flex;
        align-items: center;
        gap: 10px;
        cursor: pointer;
    }

    .radios input {
        appearance: none;
        width: 14px;
        height: 14px;
        background: #fff;
        border: 1px solid #dcdfe6;
        border-radius: 50%;
    }

    .radios input:checked {
        border: 5px solid #409eff;
    }

    .radios input:checked + span {
        color: #409eff;
    }

    .fees {
        display: grid;
        grid-template-columns: repeat(4, 1fr);
        flex: 1;
        max-width: 1253px;
    }

    .fee {
        display: flex;
        height: 38px;
        border: 1px solid #dcdfe6;
        border-radius: 4px;
        overflow: hidden;
    }

    .fee input {
        flex: 1;
        min-width: 0;
        padding: 0 15px;
        border: 0;
        color: #606266;
        outline: none;
    }

    .addon {
        padding: 0 20px;
        background: #f5f7fa;
        color: #909399;
        line-height: 38px;
    }

    label.addon {
        border-right: 1px solid #dcdfe6;
    }

    span.addon {
        border-left: 1px solid #dcdfe6;
    }

    .map {
        position: relative;
        flex: 1;
        height: 500px;
        overflow: hidden;
        background: #fcf9f2;
    }

    .canvas {
        display: block;
        width: 100%;
        height: 100%;
        font-family: "Noto Sans CJK SC", sans-serif;
    }

    .green-area {
        fill: #c9e59d;
    }

    .water {
        fill: #a3ccff;
    }

    .stream,
    .road {
        fill: none;
        stroke-linejoin: round;
    }

    .stream {
        stroke: #a3ccff;
    }

    .minor-edge {
        stroke: #e0d9cf;
        stroke-width: 5;
    }

    .minor {
        stroke: #fff;
        stroke-width: 2;
    }

    .yellow-edge {
        stroke: #f1cd59;
        stroke-width: 7;
    }

    .yellow {
        stroke: #f6df96;
        stroke-width: 4;
    }

    .orange-edge {
        stroke: #e6ae60;
        stroke-width: 7;
    }

    .orange {
        stroke: #f5ca87;
        stroke-width: 5;
    }

    .main-edge {
        stroke: #dfab0c;
        stroke-width: 7;
    }

    .main-road {
        stroke: #efc840;
        stroke-width: 3;
    }

    .name {
        font-size: 13px;
        fill: #3c3d45;
        stroke: #fff;
        stroke-width: 2;
        stroke-linejoin: round;
        paint-order: stroke;
    }

    .name.gray {
        fill: #868c94;
    }

    .name.village {
        font-size: 11px;
        fill: #8a8a8a;
    }

    .name.road {
        font-size: 14px;
        fill: #333;
    }

    .name.green {
        fill: #187a18;
    }

    .name.park {
        fill: #54953f;
    }

    .name.brown {
        fill: #7c431c;
    }

    .name.street {
        fill: #8c7868;
    }

    .name.line {
        font-size: 12px;
        fill: #e0666c;
    }

    .name.river {
        fill: #4a86cc;
    }

    .name.express {
        font-size: 14px;
        fill: #77502a;
    }

    .district,
    .shield {
        font-size: 12px;
        font-weight: 700;
        text-anchor: middle;
        fill: #fff;
    }

    .shield {
        font-size: 11px;
        font-family: "Noto Sans", sans-serif;
        font-weight: 600;
    }

    .national {
        fill: #fb3b36;
    }

    .province {
        fill: #ffc524;
    }

    .province-text {
        fill: #4d4320;
        font-weight: 500;
    }

    .search {
        position: absolute;
        top: 10px;
        left: 20px;
        display: flex;
        width: 360px;
        height: 45px;
        background: #fff;
        border-radius: 2px;
        box-shadow: 0 2px 4px rgba(0, 0, 0, 0.2);
    }

    .search input {
        flex: 1;
        min-width: 0;
        padding: 0 12px;
        border: 0;
        background: none;
        outline: none;
    }

    .search button {
        padding: 0 8px;
        border: 0;
        background: none;
        color: #000;
    }

    .locate {
        position: absolute;
        left: 10px;
        bottom: 20px;
        display: flex;
        align-items: center;
        justify-content: center;
        width: 37px;
        height: 37px;
        padding: 0;
        background: #fff;
        border: 1px solid #ccc;
        border-radius: 3px;
    }

    .locate span {
        width: 12px;
        height: 12px;
        background: #666;
        border: 2px solid #fff;
        border-radius: 50%;
        box-shadow: 0 0 2px 1px #777;
    }

    .credit {
        position: absolute;
        left: 2px;
        bottom: -8px;
        display: flex;
        align-items: flex-end;
        color: #000;
        font-size: 12px;
        line-height: 16px;
        white-space: nowrap;
    }

    .credit svg {
        width: 20px;
        height: 18px;
        margin-bottom: 5px;
    }

    .credit b {
        margin: 0 4px 5px 3px;
        color: #555;
        text-shadow: 0 0 2px #fff;
    }

    .map-actions {
        position: absolute;
        right: -15px;
        bottom: 16px;
        display: flex;
        gap: 14px;
    }

    .map-actions button {
        height: 28px;
        padding: 0 16px;
        border: 0;
        border-radius: 3px;
        color: #fff;
        font-size: 12px;
    }

    .map-actions .primary {
        background: #409eff;
    }

    .map-actions .danger {
        background: #f56c6c;
    }

    .save {
        height: 40px;
        padding: 0 21px;
        border: 0;
        border-radius: 4px;
        background: #409eff;
        color: #fff;
    }
</style>
